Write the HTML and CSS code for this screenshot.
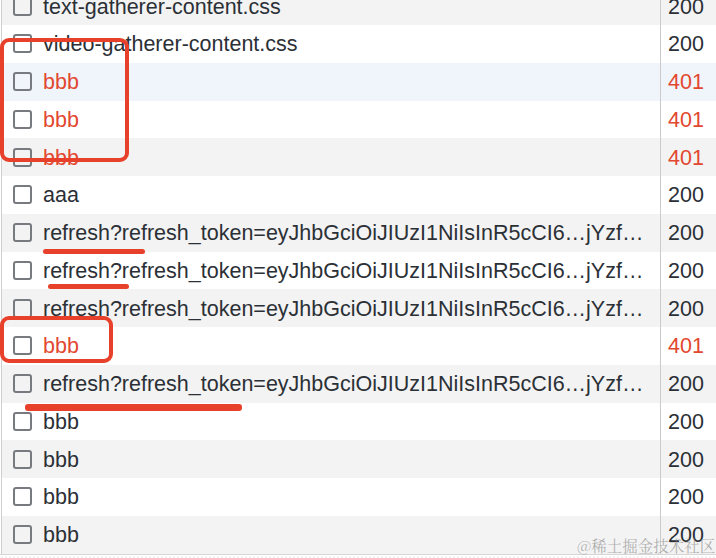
FILE: index.html
```html
<!DOCTYPE html>
<html>
<head>
<meta charset="utf-8">
<link rel="stylesheet" href="styles.css">
</head>
<body>
<div class="panel">
  <div class="list">
    <div class="row grey"><div class="name"><span class="cb"></span><span class="txt">text-gatherer-content.css</span></div><div class="status">200</div></div>
    <div class="row"><div class="name"><span class="cb"></span><span class="txt">video-gatherer-content.css</span></div><div class="status">200</div></div>
    <div class="row sel err"><div class="name"><span class="cb"></span><span class="txt">bbb</span></div><div class="status">401</div></div>
    <div class="row err"><div class="name"><span class="cb"></span><span class="txt">bbb</span></div><div class="status">401</div></div>
    <div class="row grey err"><div class="name"><span class="cb"></span><span class="txt">bbb</span></div><div class="status">401</div></div>
    <div class="row"><div class="name"><span class="cb"></span><span class="txt">aaa</span></div><div class="status">200</div></div>
    <div class="row grey"><div class="name"><span class="cb"></span><span class="txt">refresh?refresh_token=eyJhbGciOiJIUzI1NiIsInR5cCI6…jYzf…</span></div><div class="status">200</div></div>
    <div class="row"><div class="name"><span class="cb"></span><span class="txt">refresh?refresh_token=eyJhbGciOiJIUzI1NiIsInR5cCI6…jYzf…</span></div><div class="status">200</div></div>
    <div class="row grey"><div class="name"><span class="cb"></span><span class="txt">refresh?refresh_token=eyJhbGciOiJIUzI1NiIsInR5cCI6…jYzf…</span></div><div class="status">200</div></div>
    <div class="row err"><div class="name"><span class="cb"></span><span class="txt">bbb</span></div><div class="status">401</div></div>
    <div class="row grey"><div class="name"><span class="cb"></span><span class="txt">refresh?refresh_token=eyJhbGciOiJIUzI1NiIsInR5cCI6…jYzf…</span></div><div class="status">200</div></div>
    <div class="row"><div class="name"><span class="cb"></span><span class="txt">bbb</span></div><div class="status">200</div></div>
    <div class="row grey"><div class="name"><span class="cb"></span><span class="txt">bbb</span></div><div class="status">200</div></div>
    <div class="row"><div class="name"><span class="cb"></span><span class="txt">bbb</span></div><div class="status">200</div></div>
    <div class="row grey"><div class="name"><span class="cb"></span><span class="txt">bbb</span></div><div class="status">200</div></div>
  </div>
  <div class="footer"></div>

  <div class="mark box1"></div>
  <div class="mark box2"></div>
  <div class="mark line1"></div>
  <div class="mark line2"></div>
  <div class="mark line3"></div>
  <div class="watermark">@稀土掘金技术社区</div>
</div>
</body>
</html>
```
FILE: styles.css
```css
html, body {
  margin: 0;
  padding: 0;
  background: #ffffff;
  overflow: hidden;
}
.panel {
  position: relative;
  width: 716px;
  height: 558px;
  overflow: hidden;
  font-family: "Liberation Sans", Arial, sans-serif;
  font-size: 21.5px;
  color: #2b3036;
}
.list {
  margin-top: -12.75px;
  border-left: 1px solid #cfcfcf;
  margin-left: 1px;
}
.row {
  display: flex;
  height: 37.75px;
  background: #ffffff;
}
.row.grey { background: #f3f3f3; }
.row.sel { background: #f0f4fb; }
.name {
  width: 658px;
  display: flex;
  align-items: center;
  padding-left: 11px;
  box-sizing: border-box;
  overflow: hidden;
  white-space: nowrap;
}
.txt {
  padding-top: 2px;
}
.cb {
  width: 19px;
  height: 19px;
  box-sizing: border-box;
  border: 2px solid #777a7e;
  border-radius: 3px;
  flex: none;
  margin-right: 11px;
}
.status {
  flex: 1;
  border-left: 1px solid #cbcbcb;
  display: flex;
  align-items: center;
  padding-left: 7px;
  padding-top: 2px;
  box-sizing: border-box;
}
.err .txt, .err .status { color: #e2472f; }
.footer {
  border-top: 1px solid #d6d6d6;
  height: 20px;
  background-color: #ffffff;
  background-image: radial-gradient(circle, #e2e2e2 0.6px, transparent 0.8px);
  background-size: 4px 4px;
}
.mark {
  position: absolute;
  border-color: #e8412b;
}
.box1 {
  left: 0;
  top: 38px;
  width: 129px;
  height: 124px;
  border: 4px solid #e8412b;
  border-radius: 9px;
  box-sizing: border-box;
}
.box2 {
  left: 0;
  top: 316px;
  width: 113px;
  height: 47px;
  border: 4px solid #e8412b;
  border-radius: 9px;
  box-sizing: border-box;
}
.line1, .line2, .line3 {
  background: #e8412b;
  border-radius: 3px;
}
.line1 { left: 43px; top: 249px; width: 102px; height: 5px; }
.line2 { left: 48px; top: 284px; width: 81px; height: 5px; }
.line3 { left: 25px; top: 404px; width: 217px; height: 7px; }
.watermark {
  position: absolute;
  left: 577px;
  top: 534px;
  font-family: "Noto Serif CJK SC", "Noto Sans CJK SC", serif;
  font-size: 15.5px;
  color: rgba(130, 130, 130, 0.6);
  white-space: nowrap;
}
```
